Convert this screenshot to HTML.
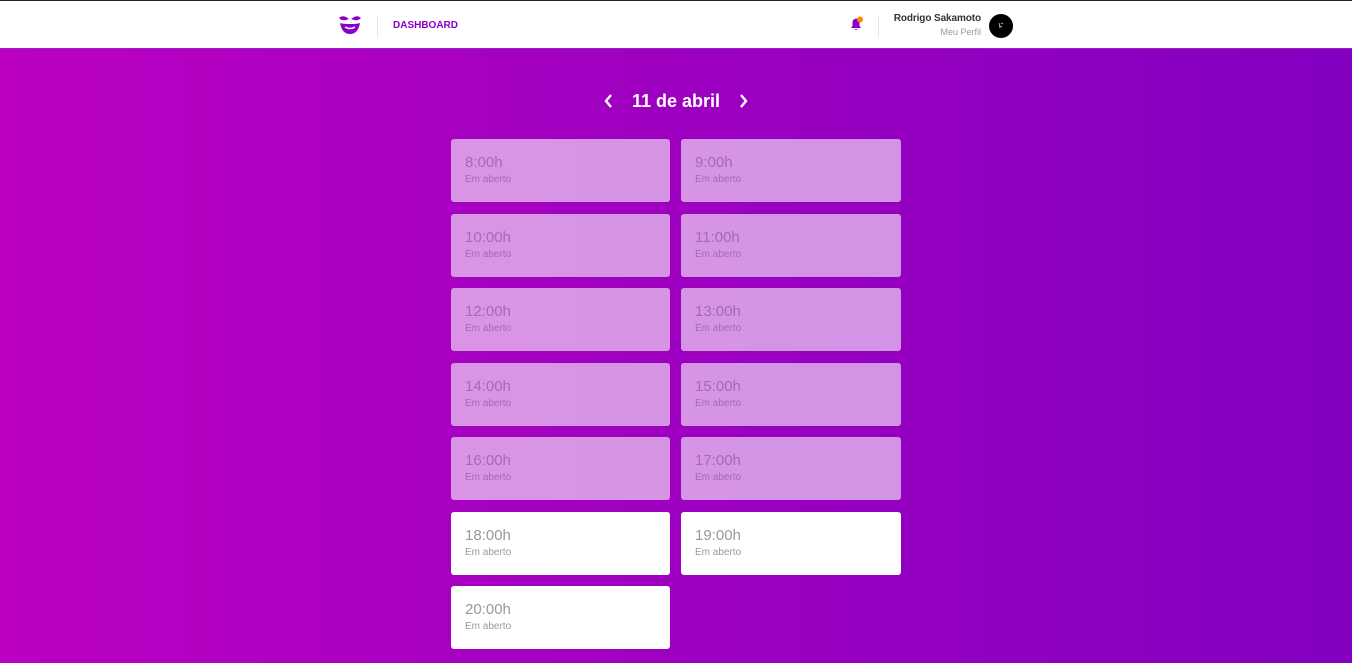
<!DOCTYPE html><html><head><style>
*{margin:0;padding:0;box-sizing:border-box}
body{width:1352px;height:663px;overflow:hidden;font-family:"Liberation Sans",sans-serif;background:linear-gradient(90deg,#bb00c2 0%,#a000c0 45%,#8300c0 100%);position:relative}
.hd{position:absolute;left:0;top:0;width:1352px;height:49px;background:#fff;border-top:1px solid #222;border-bottom:1px solid #9a20c0}
.dash{position:absolute;left:393px;top:19px;font-size:10px;font-weight:bold;color:#8a00c8}
.sep{position:absolute;top:15px;width:1px;height:22px;background:#e6e6e6}
.name{position:absolute;right:371px;top:12px;font-size:10px;font-weight:bold;color:#333;text-align:right;letter-spacing:-.1px}
.perf{position:absolute;right:371px;top:26px;font-size:9px;color:#999}
.av{position:absolute;left:989px;top:13px;width:24px;height:24px;border-radius:50%;background:#000}
.title{position:absolute;left:0;width:1352px;top:91px;text-align:center;color:#fff;font-size:18px;font-weight:bold}
.card{position:absolute;width:219px;height:63px;border-radius:3px;background:rgba(255,255,255,.58);color:#a56bb0}
.card.w{background:#fff;color:#999}
.card b{position:absolute;left:14px;top:15px;font-weight:normal;font-size:15px}
.card span{position:absolute;left:14px;top:35px;font-size:10px}
</style></head><body>
<div class="hd">
<svg style="position:absolute;left:338px;top:14px" width="24" height="20" viewBox="0 0 24 20"><path d="M1 3 Q4 0 8 2 L11 4 L8 5 Q4 6 1 3Z M23 3 Q20 0 16 2 L13 4 L16 5 Q20 6 23 3Z" fill="#8a00c8"/><path d="M2 8 Q5 9 12 9 Q19 9 22 8 Q20 19 12 19 Q4 19 2 8Z" fill="#8a00c8"/><path d="M7 12 Q12 15 17 12" stroke="#fff" stroke-width="1.5" fill="none"/></svg>
<div class="sep" style="left:377px"></div>
<div class="dash">DASHBOARD</div>
<svg style="position:absolute;left:849px;top:15px" width="16" height="16" viewBox="0 0 16 16"><path d="M2 12 L3.5 10 V6.5 Q3.5 3 7 2.5 Q10.5 3 10.5 6.5 V10 L12 12Z M5.5 13 Q7 15 8.5 13Z" fill="#8a00c8"/><circle cx="11" cy="3.5" r="3" fill="#ff8a00"/></svg>
<div class="sep" style="left:878px"></div>
<div class="name">Rodrigo Sakamoto</div>
<div class="perf">Meu Perfil</div>
<div class="av"><svg width="24" height="24" viewBox="0 0 24 24"><path d="M10 9 L11 14 M12 10 L14 9 M11 12 L13 13" stroke="#ccc" stroke-width=".8" fill="none"/></svg></div>
</div>
<svg style="position:absolute;left:603px;top:93px" width="12" height="16" viewBox="0 0 12 16"><path d="M8 2 L3 8 L8 14" stroke="#fff" stroke-width="2.4" fill="none"/></svg>
<div class="title">11 de abril</div>
<svg style="position:absolute;left:737px;top:93px" width="12" height="16" viewBox="0 0 12 16"><path d="M4 2 L9 8 L4 14" stroke="#fff" stroke-width="2.4" fill="none"/></svg>
<div class="card" style="left:451px;top:139px"><b>8:00h</b><span>Em aberto</span></div>
<div class="card" style="left:681px;top:139px;width:220px"><b>9:00h</b><span>Em aberto</span></div>
<div class="card" style="left:451px;top:214px"><b>10:00h</b><span>Em aberto</span></div>
<div class="card" style="left:681px;top:214px;width:220px"><b>11:00h</b><span>Em aberto</span></div>
<div class="card" style="left:451px;top:288px"><b>12:00h</b><span>Em aberto</span></div>
<div class="card" style="left:681px;top:288px;width:220px"><b>13:00h</b><span>Em aberto</span></div>
<div class="card" style="left:451px;top:363px"><b>14:00h</b><span>Em aberto</span></div>
<div class="card" style="left:681px;top:363px;width:220px"><b>15:00h</b><span>Em aberto</span></div>
<div class="card" style="left:451px;top:437px"><b>16:00h</b><span>Em aberto</span></div>
<div class="card" style="left:681px;top:437px;width:220px"><b>17:00h</b><span>Em aberto</span></div>
<div class="card w" style="left:451px;top:512px"><b>18:00h</b><span>Em aberto</span></div>
<div class="card w" style="left:681px;top:512px;width:220px"><b>19:00h</b><span>Em aberto</span></div>
<div class="card w" style="left:451px;top:586px"><b>20:00h</b><span>Em aberto</span></div>
</body></html>
